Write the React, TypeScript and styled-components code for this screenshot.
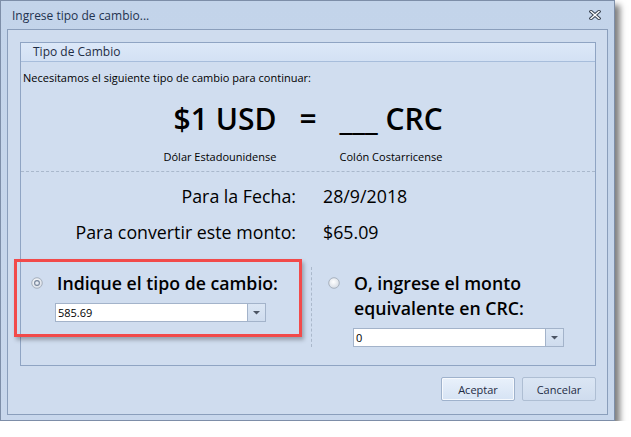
import styled, { createGlobalStyle } from 'styled-components';

const GlobalStyle = createGlobalStyle`
  html, body {
    margin: 0;
    padding: 0;
    background: #ffffff;
  }
  body {
    font-family: "Open Sans", "Noto Sans", sans-serif;
    color: #000;
  }
`;

const Window = styled.div`
  width: 615px;
  height: 421px;
  box-sizing: border-box;
  border: 1px solid #7d8ea8;
  background: linear-gradient(#c3d4ea, #c8d7ec);
  box-shadow: 5px 5px 6px rgba(0, 0, 0, 0.5);
  display: flex;
  flex-direction: column;
`;

const TitleBar = styled.div`
  height: 28px;
  flex: none;
  display: flex;
  align-items: center;
  justify-content: space-between;
  padding: 0 13px 0 11px;
  font-size: 12px;
  color: #1f3350;
`;

const Client = styled.div`
  flex: 1;
  margin: 0 6px 5px 6px;
  border: 1px solid #8a9ebb;
  background: #cfdcee;
  display: flex;
  flex-direction: column;
  padding: 12px 11px 13px 12px;
`;

const Group = styled.div`
  flex: 1;
  border: 1px solid #8fa4c3;
  background: #d0ddef;
  display: flex;
  flex-direction: column;
`;

const GroupHeader = styled.div`
  height: 18px;
  line-height: 18px;
  padding-left: 12px;
  font-size: 12px;
  color: #1e2c44;
  background: linear-gradient(#dce8f8, #d3e1f4);
  border-bottom: 1px solid #a7bddb;
`;

const GroupBody = styled.div`
  padding: 8px 0 0 0;
  display: flex;
  flex-direction: column;
`;

const Intro = styled.div`
  font-size: 11px;
  line-height: 15px;
  padding-left: 2px;
`;

const Equation = styled.div`
  display: grid;
  grid-template-columns: 1fr auto 1fr;
  column-gap: 23px;
  margin-top: 15px;
`;

const Big = styled.div<{ $align: 'end' | 'start' | 'center' }>`
  font-size: 30px;
  font-weight: 600;
  line-height: 38px;
  justify-self: ${(p) => p.$align};
`;

const Currency = styled.div<{ $align: 'end' | 'start' }>`
  font-size: 11px;
  line-height: 15px;
  margin-top: 11px;
  justify-self: ${(p) => p.$align};
`;

const DashedRule = styled.div`
  border-top: 1px dashed #a9b8cc;
  margin-top: 7px;
`;

const InfoGrid = styled.div`
  display: grid;
  grid-template-columns: 275px 1fr;
  column-gap: 27px;
  row-gap: 12px;
  margin-top: 12px;
  font-size: 17.8px;
  line-height: 24px;
`;

const InfoLabel = styled.div`
  text-align: right;
`;

const Options = styled.div`
  display: grid;
  grid-template-columns: 291px 1fr;
  margin-top: 23px;
`;

const Option = styled.div<{ $highlight?: boolean }>`
  position: relative;
  display: flex;
  flex-direction: column;
  padding: 4px 0 12px 0;
  ${(p) =>
    p.$highlight &&
    `
    &::after {
      content: '';
      position: absolute;
      left: -7px;
      top: -8px;
      width: 288px;
      height: 78px;
      box-sizing: border-box;
      border: 3px solid #f24a4a;
      box-shadow: 2px 3px 4px rgba(0, 0, 0, 0.28);
    }
  `}
`;

const LeftOption = styled(Option)`
  padding-left: 10px;
  border-right: 1px dashed #aab8cb;
  margin-bottom: 12px;
`;

const RightOption = styled(Option)`
  padding-left: 16px;
`;

const OptionHead = styled.div`
  display: flex;
  align-items: flex-start;
  gap: 14px;
`;

const OptionTitle = styled.div`
  font-size: 17.7px;
  font-weight: 600;
  line-height: 25px;
`;

const Field = styled.div<{ $width: number; $indent: number }>`
  display: flex;
  width: ${(p) => p.$width}px;
  height: 19px;
  box-sizing: border-box;
  border: 1px solid #a3b3ca;
  background: #fff;
  margin: 7px 0 0 ${(p) => p.$indent}px;
`;

const FieldText = styled.div`
  flex: 1;
  font-size: 11px;
  line-height: 17px;
  padding-left: 2px;
`;

const DropButton = styled.div`
  width: 17px;
  border-left: 1px solid #a3b3ca;
  background: linear-gradient(#dbe6f4, #cfdcee);
  display: flex;
  align-items: center;
  justify-content: center;
`;

const ButtonRow = styled.div`
  display: flex;
  justify-content: flex-end;
  gap: 7px;
  margin-top: 11px;
`;

const Button = styled.div<{ $default?: boolean }>`
  width: 74px;
  height: 24px;
  box-sizing: border-box;
  border: 1px solid ${(p) => (p.$default ? '#9fb2cc' : '#aebed3')};
  border-radius: 2px;
  background: ${(p) =>
    p.$default ? 'linear-gradient(#e9f1fb, #d6e3f4)' : 'linear-gradient(#dbe6f4, #cfdcee)'};
  box-shadow: ${(p) => (p.$default ? 'inset 0 0 0 1px #f6f9fd' : 'none')};
  display: flex;
  align-items: center;
  justify-content: center;
  font-size: 11px;
  color: #1e2c44;
`;

const CloseIcon = () => (
  <svg width="12" height="10" viewBox="0 0 12 10">
    <path d="M2 1.5 L10 8.5 M10 1.5 L2 8.5" stroke="#3a4452" strokeWidth="3.4" strokeLinecap="square" />
    <path d="M2 1.5 L10 8.5 M10 1.5 L2 8.5" stroke="#ffffff" strokeWidth="1.4" strokeLinecap="square" />
  </svg>
);

const Radio = ({ checked }: { checked?: boolean }) => (
  <svg width="12" height="12" viewBox="0 0 12 12" style={{ marginTop: 6, flex: 'none' }}>
    <defs>
      <radialGradient id={checked ? 'rg1' : 'rg2'} cx="0.45" cy="0.4" r="0.7">
        <stop offset="0" stopColor="#ffffff" />
        <stop offset="1" stopColor="#cfd6e0" />
      </radialGradient>
    </defs>
    <circle cx="6" cy="6" r="5.3" fill={`url(#${checked ? 'rg1' : 'rg2'})`} stroke="#a7b1be" strokeWidth="1" />
    {checked && <circle cx="6" cy="6" r="2.4" fill="#e7ecf3" stroke="#75849a" strokeWidth="1.1" />}
  </svg>
);

const DropArrow = () => (
  <svg width="7" height="5" viewBox="0 0 7 5">
    <path d="M0 1 H7 L3.5 4.5 Z" fill="#4c5564" />
  </svg>
);

export default function App() {
  return (
    <>
      <GlobalStyle />
      <Window>
        <TitleBar>
          <span>Ingrese tipo de cambio...</span>
          <CloseIcon />
        </TitleBar>
        <Client>
          <Group>
            <GroupHeader>Tipo de Cambio</GroupHeader>
            <GroupBody>
              <Intro>Necesitamos el siguiente tipo de cambio para continuar:</Intro>
              <Equation>
                <Big $align="end">$1 USD</Big>
                <Big $align="center">=</Big>
                <Big $align="start">___ CRC</Big>
                <Currency $align="end">Dólar Estadounidense</Currency>
                <div />
                <Currency $align="start">Colón Costarricense</Currency>
              </Equation>
              <DashedRule />
              <InfoGrid>
                <InfoLabel>Para la Fecha:</InfoLabel>
                <div>28/9/2018</div>
                <InfoLabel>Para convertir este monto:</InfoLabel>
                <div>$65.09</div>
              </InfoGrid>
              <Options>
                <LeftOption $highlight>
                  <OptionHead>
                    <Radio checked />
                    <OptionTitle>Indique el tipo de cambio:</OptionTitle>
                  </OptionHead>
                  <Field $width={211} $indent={24}>
                    <FieldText>585.69</FieldText>
                    <DropButton>
                      <DropArrow />
                    </DropButton>
                  </Field>
                </LeftOption>
                <RightOption>
                  <OptionHead>
                    <Radio />
                    <OptionTitle>
                      O, ingrese el monto
                      <br />
                      equivalente en CRC:
                    </OptionTitle>
                  </OptionHead>
                  <Field $width={211} $indent={25}>
                    <FieldText>0</FieldText>
                    <DropButton>
                      <DropArrow />
                    </DropButton>
                  </Field>
                </RightOption>
              </Options>
            </GroupBody>
          </Group>
          <ButtonRow>
            <Button $default>Aceptar</Button>
            <Button>Cancelar</Button>
          </ButtonRow>
        </Client>
      </Window>
    </>
  );
}
